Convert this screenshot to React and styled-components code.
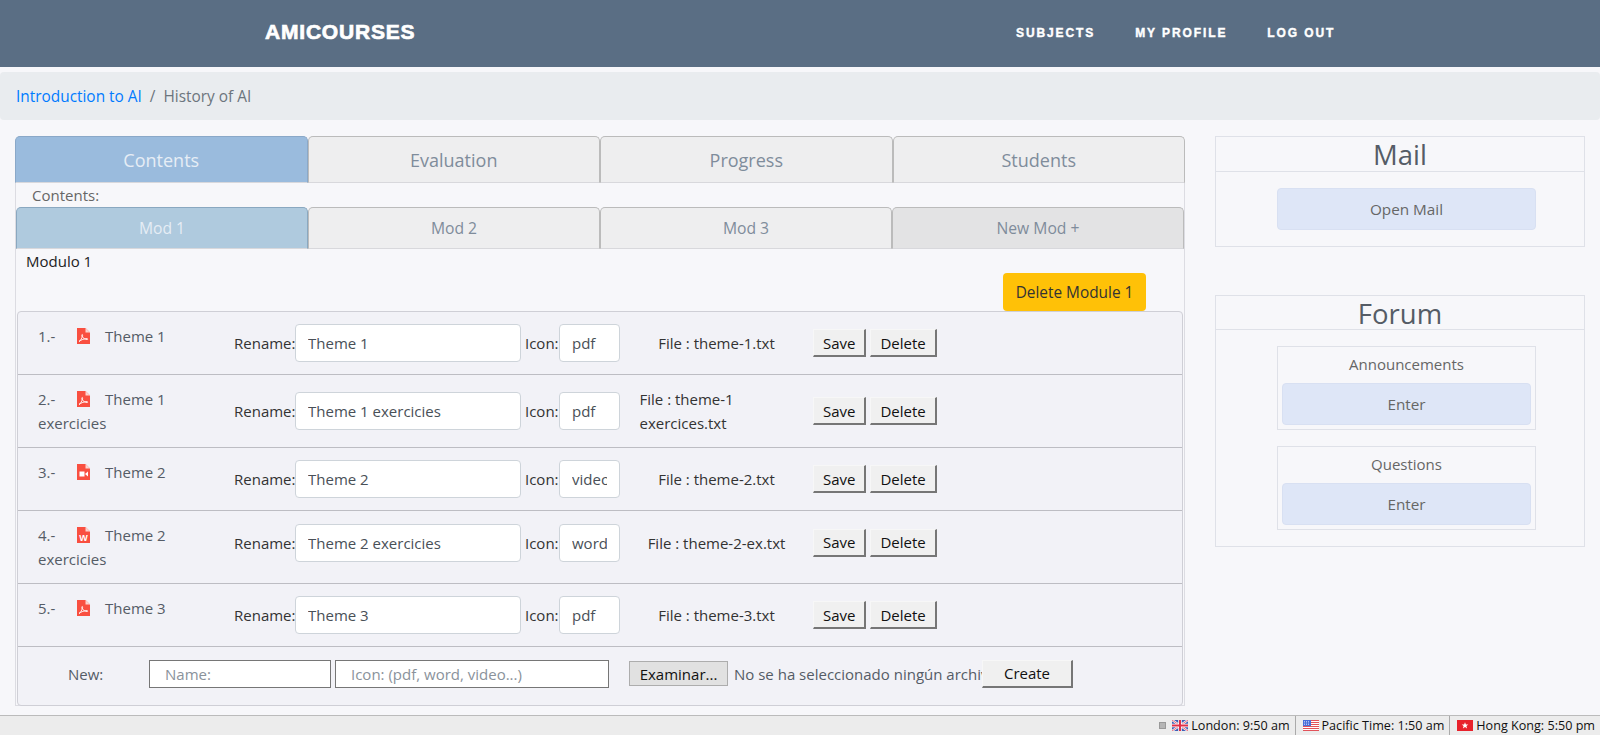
import React from 'react'
import styled, { createGlobalStyle } from 'styled-components'

const themes = [
  { num: '1.-', icon: 'pdf', title: 'Theme 1', name: 'Theme 1', type: 'pdf', file: 'File : theme-1.txt' },
  { num: '2.-', icon: 'pdf', title: 'Theme 1 exercicies', name: 'Theme 1 exercicies', type: 'pdf', file: 'File : theme-1 exercices.txt' },
  { num: '3.-', icon: 'video', title: 'Theme 2', name: 'Theme 2', type: 'video', file: 'File : theme-2.txt' },
  { num: '4.-', icon: 'word', title: 'Theme 2 exercicies', name: 'Theme 2 exercicies', type: 'word', file: 'File : theme-2-ex.txt', raised: true },
  { num: '5.-', icon: 'pdf', title: 'Theme 3', name: 'Theme 3', type: 'pdf', file: 'File : theme-3.txt' }
]

const FileIcon = ({ kind }) => (
  <IconSvg viewBox="0 0 13 16" width="13" height="16">
    <path d="M0 0h8.500L13 4.500V16H0z" fill="#f94f40" />
    <path d="M8.500 0v4.500H13z" fill="#fcd5d0" />
    {kind === 'pdf' && (
      <path d="M2 13.500c1.500-.8 3-3.400 3.600-6 .2-1-.6-1.400-.8-.6-.3 1.500 1.800 4.300 5.200 4.600 1 .1.900-.9 0-.9-2.300 0-6 1.100-8 2.900z" fill="none" stroke="#fff" strokeWidth="0.9" />
    )}
    {kind === 'video' && (
      <>
        <rect x="2.500" y="7.500" width="5" height="5" fill="#fff" />
        <path d="M8 10l3-2.500v5z" fill="#fff" />
      </>
    )}
    {kind === 'word' && (
      <text x="6.500" y="14" fontSize="9" fontWeight="700" fontFamily="Liberation Sans, sans-serif" textAnchor="middle" fill="#fff">W</text>
    )}
  </IconSvg>
)

const UkFlag = () => (
  <svg viewBox="0 0 16 11" width="16" height="11">
    <rect width="16" height="11" fill="#3f5fb5" />
    <path d="M0 0l16 11M16 0L0 11" stroke="#fff" strokeWidth="2.200" />
    <path d="M0 0l16 11M16 0L0 11" stroke="#e0455a" strokeWidth="0.800" />
    <path d="M8 0v11M0 5.500h16" stroke="#fff" strokeWidth="3.500" />
    <path d="M8 0v11M0 5.500h16" stroke="#e0304a" strokeWidth="2" />
  </svg>
)

const UsFlag = () => (
  <svg viewBox="0 0 16 11" width="16" height="11">
    <rect width="16" height="11" fill="#fff" />
    <path d="M0 .5h16M0 2.500h16M0 4.500h16M0 6.500h16M0 8.500h16M0 10.500h16" stroke="#e2535a" strokeWidth="1" />
    <rect width="8" height="6" fill="#4a6fd8" />
    <path d="M1 1.500h6M1 3h6M1 4.500h6" stroke="#dfe7ff" strokeWidth="0.700" strokeDasharray="1 1" />
  </svg>
)

const HkFlag = () => (
  <svg viewBox="0 0 16 11" width="16" height="11">
    <rect width="16" height="11" fill="#e8212b" />
    <path d="M8 2.200l.9 2.300 2.400.1-1.900 1.500.7 2.300-2.100-1.300-2.100 1.300.7-2.300L4.700 4.600l2.400-.1z" fill="#fff" />
  </svg>
)

const App = () => (
  <Page>
    <GlobalStyle />
    <Header>
      <Brand>AMICOURSES</Brand>
      <Nav>
        <NavLink>SUBJECTS</NavLink>
        <NavLink>MY PROFILE</NavLink>
        <NavLink>LOG OUT</NavLink>
      </Nav>
    </Header>
    <Breadcrumb>
      <Crumb>Introduction to AI</Crumb>
      <CrumbSep>/</CrumbSep>
      <CrumbCurrent>History of AI</CrumbCurrent>
    </Breadcrumb>
    <Main>
      <LeftColumn>
        <Tabs>
          <Tab active>Contents</Tab>
          <Tab>Evaluation</Tab>
          <Tab>Progress</Tab>
          <Tab>Students</Tab>
        </Tabs>
        <Panel>
          <PanelLabel>Contents:</PanelLabel>
          <SubTabs>
            <SubTab active>Mod 1</SubTab>
            <SubTab>Mod 2</SubTab>
            <SubTab>Mod 3</SubTab>
            <SubTab add>New Mod +</SubTab>
          </SubTabs>
          <ModuleTitle>Modulo 1</ModuleTitle>
          <ModuleActions>
            <DeleteModule>Delete Module 1</DeleteModule>
          </ModuleActions>
          <ThemeList>
            {themes.map(t => (
              <ThemeRow key={t.num} raised={t.raised}>
                <ThemeCell>
                  <ThemeNum>{t.num}</ThemeNum>
                  <FileIcon kind={t.icon} />
                  {t.title}
                </ThemeCell>
                <RenameLabel>Rename:</RenameLabel>
                <NameInput defaultValue={t.name} />
                <IconLabel>Icon:</IconLabel>
                <TypeInput defaultValue={t.type} />
                <FileCell><FileName>{t.file}</FileName></FileCell>
                <ActionButton>Save</ActionButton>
                <ActionButton>Delete</ActionButton>
              </ThemeRow>
            ))}
            <NewRow>
              <NewLabel>New:</NewLabel>
              <NewInput width={182} placeholder="Name:" />
              <NewInput width={274} placeholder="Icon: (pdf, word, video...)" />
              <BrowseButton>Examinar...</BrowseButton>
              <NoFile>No se ha seleccionado ningún archivo</NoFile>
              <CreateButton>Create</CreateButton>
            </NewRow>
          </ThemeList>
        </Panel>
      </LeftColumn>
      <RightColumn>
        <SideBox>
          <SideTitle>Mail</SideTitle>
          <SideBody>
            <SideButton>Open Mail</SideButton>
          </SideBody>
        </SideBox>
        <SideBox>
          <SideTitle tight>Forum</SideTitle>
          <SideBody>
            <ForumCard>
              <ForumName>Announcements</ForumName>
              <SideButton>Enter</SideButton>
            </ForumCard>
            <ForumCard>
              <ForumName>Questions</ForumName>
              <SideButton>Enter</SideButton>
            </ForumCard>
          </SideBody>
        </SideBox>
      </RightColumn>
    </Main>
    <Footer>
      <Collapse />
      <Clock first><UkFlag />London: 9:50 am</Clock>
      <Clock><UsFlag />Pacific Time: 1:50 am</Clock>
      <Clock><HkFlag />Hong Kong: 5:50 pm</Clock>
    </Footer>
  </Page>
)

export default App

const GlobalStyle = createGlobalStyle`
  * { box-sizing: border-box; }
  body {
    margin: 0;
    background: #f7f7fa;
    font-family: "Open Sans", "Noto Sans", sans-serif;
  }
`

const Page = styled.div`
  height: 100vh;
  display: flex;
  flex-direction: column;
  overflow: hidden;
  background: #f7f7fa;
`

const Header = styled.header`
  height: 67px;
  flex-shrink: 0;
  background: #5a6e84;
  display: flex;
  align-items: center;
  padding: 0 0 3px 265px;
`

const Brand = styled.div`
  width: 751px;
  color: #fff;
  font: 700 21px "Liberation Sans", sans-serif;
  letter-spacing: 0.8px;
  -webkit-text-stroke: 0.7px #fff;
`

const Nav = styled.nav`
  display: flex;
  gap: 40px;
  padding-top: 1px;
`

const NavLink = styled.a`
  color: #fff;
  font: 700 12px "Liberation Sans", sans-serif;
  letter-spacing: 1.9px;
  -webkit-text-stroke: 0.4px #fff;
`

const Breadcrumb = styled.div`
  margin-top: 5px;
  height: 48px;
  flex-shrink: 0;
  background: #e9ecef;
  border-radius: 4px;
  padding: 1px 0 0 16px;
  display: flex;
  align-items: center;
  font-size: 15.4px;
`

const Crumb = styled.a`
  color: #007bff;
`

const CrumbSep = styled.span`
  color: #6c757d;
  margin: 0 8px;
`

const CrumbCurrent = styled.span`
  color: #6c757d;
`

const Main = styled.main`
  flex: 1;
  min-height: 0;
  display: flex;
  padding: 16px 0 0 15px;
`

const LeftColumn = styled.div`
  width: 1170px;
`

const Tabs = styled.div`
  display: grid;
  grid-template-columns: repeat(4, 1fr);
  height: 47px;
`

const Tab = styled.div`
  display: flex;
  align-items: center;
  justify-content: center;
  font-size: 18px;
  border: 1px solid ${p => (p.active ? '#8aa8c8' : '#bbb')};
  border-bottom-color: #d8d8dc;
  border-radius: 5px 5px 0 0;
  background: ${p => (p.active ? '#9abbdd' : '#eeeeef')};
  color: ${p => (p.active ? '#e6edf5' : '#7f8c9b')};
`

const Panel = styled.div`
  height: 523px;
  border: 1px solid #dcdce2;
  border-top: 0;
`

const PanelLabel = styled.div`
  height: 24px;
  line-height: 24px;
  padding-left: 16px;
  font-size: 15px;
  color: #666;
`

const SubTabs = styled.div`
  display: grid;
  grid-template-columns: repeat(4, 1fr);
  height: 42px;
`

const SubTab = styled.div`
  display: flex;
  align-items: center;
  justify-content: center;
  font-size: 15.7px;
  border: 1px solid ${p => (p.active ? '#8aa8c0' : '#bbb')};
  border-bottom-color: #d8d8dc;
  border-radius: 5px 5px 0 0;
  background: ${p => (p.active ? '#afcade' : p.add ? '#e3e3e4' : '#eeeeef')};
  color: ${p => (p.active ? '#e6edf5' : '#7f8c9b')};
`

const ModuleTitle = styled.div`
  height: 24px;
  line-height: 24px;
  padding-left: 10px;
  font-size: 15px;
  color: #222;
`

const ModuleActions = styled.div`
  display: flex;
  justify-content: flex-end;
  padding-right: 38px;
`

const DeleteModule = styled.button`
  width: 143px;
  height: 38px;
  border: 0;
  border-radius: 4px;
  background: #ffc107;
  color: #333;
  font: inherit;
  font-size: 15.4px;
  padding: 0;
`

const ThemeList = styled.div`
  margin-left: 1px;
  width: 1166px;
  border: 1px solid #cfcfd6;
  border-radius: 4px;
  background: #f2f2f7;
`

const ThemeRow = styled.div`
  display: flex;
  align-items: center;
  min-height: 63px;
  padding-bottom: ${p => (p.raised ? '9px' : '0')};
  height: ${p => (p.raised ? '73px' : 'auto')};
  border-bottom: 1px solid #bdbdc3;
  font-size: 15px;
  color: #333;
`

const ThemeCell = styled.div`
  align-self: flex-start;
  flex-shrink: 0;
  width: 216px;
  padding: 12px 20px;
  line-height: 24px;
  color: #555c66;
`

const ThemeNum = styled.span`
  display: inline-block;
  width: 39px;
`

const IconSvg = styled.svg`
  margin-right: 15px;
  vertical-align: -2px;
`

const RenameLabel = styled.label`
  width: 61px;
  flex-shrink: 0;
`

const NameInput = styled.input`
  width: 226px;
  height: 38px;
  flex-shrink: 0;
  padding: 0 12px;
  border: 1px solid #ced4da;
  border-radius: 4px;
  background: #fff;
  color: #495057;
  font: inherit;
`

const IconLabel = styled.label`
  width: 34px;
  margin-left: 4px;
  flex-shrink: 0;
`

const TypeInput = styled(NameInput)`
  width: 61px;
`

const FileCell = styled.div`
  width: 193px;
  flex-shrink: 0;
  display: flex;
  justify-content: center;
  line-height: 24px;
`

const FileName = styled.div`
  max-width: 154px;
`

const ActionButton = styled.button`
  height: 28px;
  padding: 0 9px;
  margin-right: 4px;
  min-width: 53px;
  background: #f0f0f0;
  color: #111;
  font: inherit;
  border-style: solid;
  border-width: 1px 2px 2px 1px;
  border-color: #f7f7f7 #767676 #767676 #f7f7f7;
`

const NewRow = styled.div`
  display: flex;
  align-items: center;
  height: 58px;
  padding-bottom: 5px;
  font-size: 15px;
  color: #555c66;
`

const NewLabel = styled.label`
  width: 131px;
  padding-left: 50px;
`

const NewInput = styled.input`
  width: ${p => p.width}px;
  height: 28px;
  margin-right: 4px;
  padding: 0 15px;
  border: 1px solid #767676;
  background: #fff;
  font: inherit;

  &::placeholder {
    color: #8a929b;
    opacity: 1;
  }
`

const BrowseButton = styled.button`
  width: 99px;
  height: 25px;
  margin-left: 16px;
  padding: 0;
  background: #e1e1e1;
  border: 1px solid #adadad;
  color: #111;
  font: inherit;
`

const NoFile = styled.span`
  width: 254px;
  flex-shrink: 0;
  padding-left: 6px;
  white-space: nowrap;
  overflow: hidden;
`

const CreateButton = styled(ActionButton)`
  width: 91px;
  margin: 0;
`

const RightColumn = styled.aside`
  width: 370px;
  margin-left: 30px;
  display: flex;
  flex-direction: column;
  align-items: stretch;
  gap: 48px;
`

const SideBox = styled.section`
  border: 1px solid #dfe1e8;
`

const SideTitle = styled.h3`
  margin: 0;
  height: ${p => (p.tight ? '34px' : '35px')};
  line-height: 35px;
  text-align: center;
  font-size: 27.5px;
  font-weight: 400;
  color: #555c66;
  border-bottom: 1px solid #dfe1e8;
`

const SideBody = styled.div`
  display: flex;
  flex-direction: column;
  align-items: center;
  gap: 16px;
  padding: 16px 48px 16px 61px;
`

const SideButton = styled.div`
  width: 100%;
  height: 42px;
  display: flex;
  align-items: center;
  justify-content: center;
  background: #dee6f7;
  border: 1px solid #d8e0f2;
  border-radius: 4px;
  color: #666;
  font-size: 15.3px;
`

const ForumCard = styled.div`
  width: 259px;
  height: 84px;
  padding: 0 4px;
  border: 1px solid #dfe1e8;
`

const ForumName = styled.div`
  height: 36px;
  line-height: 34px;
  text-align: center;
  font-size: 15px;
  color: #666;
`

const Footer = styled.footer`
  height: 20px;
  flex-shrink: 0;
  display: flex;
  align-items: center;
  justify-content: flex-end;
  background: #ececec;
  border-top: 1px solid #bbb;
  font-size: 12.6px;
  color: #111;
`

const Collapse = styled.span`
  width: 7px;
  height: 7px;
  margin-right: 6px;
  background: #b5b5b5;
  border: 1px solid #999;
`

const Clock = styled.div`
  height: 19px;
  display: flex;
  align-items: center;
  gap: 3px;
  padding: 0 5px 0 ${p => (p.first ? '0' : '7px')};
  border-left: ${p => (p.first ? '0' : '1px solid #aaa')};
`
